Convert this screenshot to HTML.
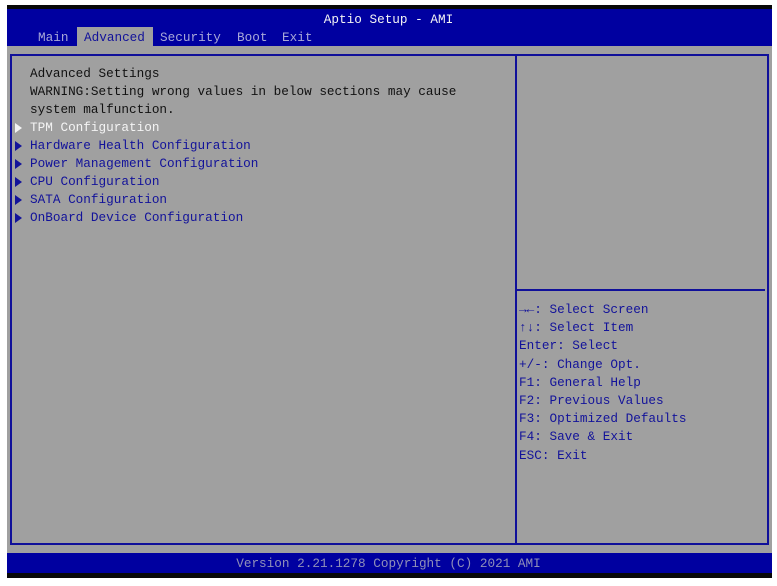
<!DOCTYPE html>
<html><head><style>
*{margin:0;padding:0;box-sizing:border-box}
body{width:777px;height:586px;background:#fff;position:relative;overflow:hidden;font-family:"Liberation Mono","DejaVu Sans Mono",monospace;font-size:12.7px}
.a{position:absolute;white-space:pre;line-height:18px}
#top{position:absolute;left:7px;top:5px;width:765px;height:4px;background:#080808}
#hdr{position:absolute;left:7px;top:9px;width:765px;height:37px;background:#0000a0}
#body{position:absolute;left:7px;top:46px;width:765px;height:507px;background:#a0a0a0}
#ftr{position:absolute;left:7px;top:553px;width:765px;height:20px;background:#0000a0}
#bot{position:absolute;left:7px;top:573px;width:765px;height:5px;background:#080808}
#frame{position:absolute;left:10px;top:54px;width:759px;height:491px;border:2px solid #10109a}
#vd{position:absolute;left:515px;top:54px;width:2px;height:491px;background:#10109a}
#hd{position:absolute;left:517px;top:289px;width:248px;height:2px;background:#10109a}
.w{color:#f4f4f4}.b{color:#12129a}.k{color:#111}
.t{position:absolute;width:0;height:0;border-top:5px solid transparent;border-bottom:5px solid transparent;border-left:7px solid #12129a}
</style></head><body>
<div id="top"></div><div id="hdr"></div><div id="body"></div><div id="ftr"></div><div id="bot"></div>
<div id="frame"></div><div id="vd"></div><div id="hd"></div>
<div class="a w" style="left:0;width:777px;text-align:center;top:11px">Aptio Setup - AMI</div>
<div style="position:absolute;left:77px;top:27px;width:76px;height:19px;background:#a0a0a0"></div>
<div class="a" style="left:38px;top:29px;color:#a8a8d8">Main</div>
<div class="a b" style="left:84px;top:29px">Advanced</div>
<div class="a" style="left:160px;top:29px;color:#a8a8d8">Security</div>
<div class="a" style="left:237px;top:29px;color:#a8a8d8">Boot</div>
<div class="a" style="left:282px;top:29px;color:#a8a8d8">Exit</div>
<div class="a k" style="left:30px;top:65px">Advanced Settings
WARNING:Setting wrong values in below sections may cause
system malfunction.</div>
<div class="t" style="left:15px;top:123px;border-left-color:#f4f4f4"></div>
<div class="t" style="left:15px;top:141px"></div>
<div class="t" style="left:15px;top:159px"></div>
<div class="t" style="left:15px;top:177px"></div>
<div class="t" style="left:15px;top:195px"></div>
<div class="t" style="left:15px;top:213px"></div>
<div class="a w" style="left:30px;top:119px">TPM Configuration</div>
<div class="a b" style="left:30px;top:137px">Hardware Health Configuration
Power Management Configuration
CPU Configuration
SATA Configuration
OnBoard Device Configuration</div>
<div class="a b" style="left:519px;top:301px;line-height:18.2px"><b>→←</b>: Select Screen
<b>↑↓</b>: Select Item
Enter: Select
+/-: Change Opt.
F1: General Help
F2: Previous Values
F3: Optimized Defaults
F4: Save &amp; Exit
ESC: Exit</div>
<div class="a" style="left:0;width:777px;text-align:center;top:555px;color:#9090b8">Version 2.21.1278 Copyright (C) 2021 AMI</div>
</body></html>
